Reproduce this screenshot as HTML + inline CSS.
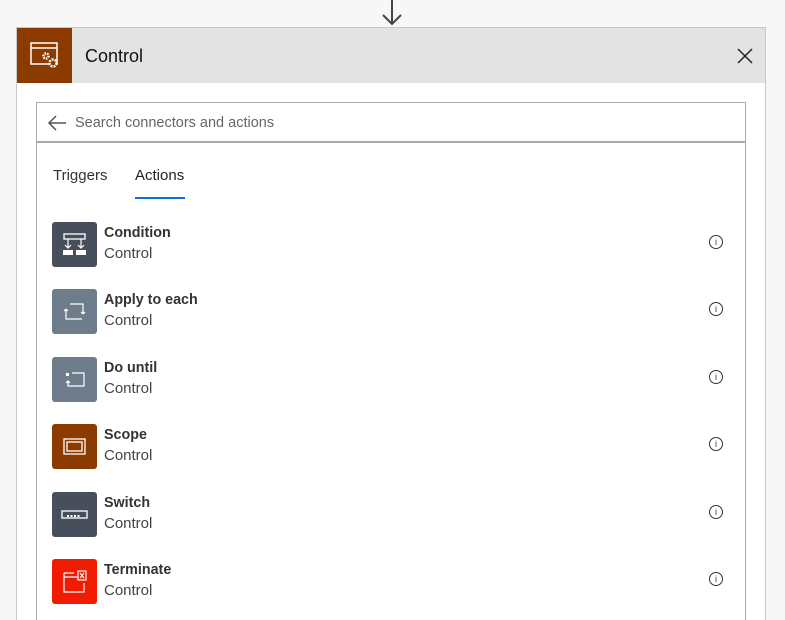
<!DOCTYPE html>
<html><head><style>
html,body{margin:0;width:785px;height:620px;overflow:hidden}
body{background:#f7f7f7;font-family:"Liberation Sans",sans-serif;position:relative}
.card{position:absolute;left:16px;top:27px;width:748px;height:600px;background:#fff;border:1px solid #c8c8c8}
.hdr{position:absolute;left:0;top:0;width:748px;height:55px;background:#e3e3e3}
.hicon{position:absolute;left:0;top:0;width:55px;height:55px;background:#8b3a00}
.htitle{position:absolute;left:68px;top:18px;font-size:18px;color:#111}
.inner{position:absolute;left:36px;top:102px;width:708px;height:530px;border:1px solid #aaa;background:#fff}
.search{height:38px;border-bottom:2px solid #aaa;position:relative}
.search span{position:absolute;left:38px;top:12px;font-size:14.5px;color:#666}
.tab{position:absolute;top:64px;font-size:15px;color:#333}
.row{position:absolute;left:15px;width:680px;height:45px}
.ic{position:absolute;left:0;top:0;width:45px;height:45px;border-radius:3px}
.t{position:absolute;left:52px;top:3px;font-size:14.3px;font-weight:bold;color:#333}
.s{position:absolute;left:52px;top:23px;font-size:15px;color:#444}
.info{position:absolute;left:657px;top:13px;width:12px;height:12px;border:1px solid #333;border-radius:50%;font-size:9px;text-align:center;line-height:12px;color:#333}
</style></head><body>
<svg style="position:absolute;left:380px;top:0" width="24" height="26"><path d="M12 0V24M3 15L12 24L21 15" stroke="#444" stroke-width="2" fill="none"/></svg>
<div class="card">
<div class="hdr"><div class="hicon"><svg width="55" height="55"><rect x="14" y="15" width="26" height="21" fill="none" stroke="#fff" stroke-width="1.5"/><line x1="14" y1="20" x2="40" y2="20" stroke="#fff" stroke-width="1.5"/><circle cx="29" cy="28" r="2.5" fill="none" stroke="#fff" stroke-width="2.5" stroke-dasharray="1.5 1"/><circle cx="36" cy="35" r="3.5" fill="#8b3a00" stroke="#fff" stroke-width="2.5" stroke-dasharray="2 1"/></svg></div><div class="htitle">Control</div>
<svg style="position:absolute;left:719px;top:19px" width="18" height="18"><path d="M2 2L16 16M16 2L2 16" stroke="#222" stroke-width="1.5"/></svg></div>
</div>
<div class="inner">
<div class="search"><svg style="position:absolute;left:10px;top:11px" width="20" height="18"><path d="M19 9H2M9 2L2 9L9 16" stroke="#555" stroke-width="1.5" fill="none"/></svg><span>Search connectors and actions</span></div>
<div class="tab" style="left:16px">Triggers</div>
<div class="tab" style="left:98px;color:#222">Actions</div>
<div style="position:absolute;left:98px;top:94px;width:50px;height:2px;background:#0f6fdc"></div>
<div class="row" style="top:119px"><div class="ic" style="background:#474f5c"><svg width="45" height="45"><rect x="12" y="12" width="21" height="5" fill="none" stroke="#fff" stroke-width="1.3"/><path d="M16 17V26M13 23L16 26L19 23M29 17V26M26 23L29 26L32 23" stroke="#fff" stroke-width="1.2" fill="none"/><rect x="11" y="28" width="10" height="5" fill="#fff"/><rect x="24" y="28" width="10" height="5" fill="#fff"/></svg></div><div class="t">Condition</div><div class="s">Control</div><div class="info">i</div></div>
<div class="row" style="top:186px"><div class="ic" style="background:#6f7c8b"><svg width="45" height="45"><path d="M14 20V30H30M14 20l-2 2M14 20l2 2M31 25V15H18M31 25l-2-2M31 25l2-2" stroke="#fff" stroke-width="1.2" fill="none"/></svg></div><div class="t">Apply to each</div><div class="s">Control</div><div class="info">i</div></div>
<div class="row" style="top:254px"><div class="ic" style="background:#6f7c8b"><svg width="45" height="45"><rect x="14" y="16" width="3" height="3" fill="#fff"/><path d="M20 16H32V29H16V24M14 26l2-2 2 2" stroke="#fff" stroke-width="1.2" fill="none"/></svg></div><div class="t">Do until</div><div class="s">Control</div><div class="info">i</div></div>
<div class="row" style="top:321px"><div class="ic" style="background:#8b3a00"><svg width="45" height="45"><rect x="12" y="15" width="21" height="15" fill="none" stroke="#fff" stroke-width="1.3"/><rect x="15" y="18" width="15" height="9" fill="none" stroke="#fff" stroke-width="1.3"/></svg></div><div class="t">Scope</div><div class="s">Control</div><div class="info">i</div></div>
<div class="row" style="top:389px"><div class="ic" style="background:#474f5c"><svg width="45" height="45"><rect x="10" y="19" width="25" height="7" fill="none" stroke="#fff" stroke-width="1.3"/><path d="M15 24h14" stroke="#fff" stroke-width="2" stroke-dasharray="2 1.5"/></svg></div><div class="t">Switch</div><div class="s">Control</div><div class="info">i</div></div>
<div class="row" style="top:456px"><div class="ic" style="background:#f01b00"><svg width="45" height="45"><path d="M12 14h10M12 18h14M12 14V33H32V24" stroke="#fff" stroke-width="1.2" fill="none"/><rect x="26" y="12" width="8" height="9" fill="none" stroke="#fff" stroke-width="1.2"/><path d="M28 14l4 5M32 14l-4 5" stroke="#fff" stroke-width="1.2"/></svg></div><div class="t">Terminate</div><div class="s">Control</div><div class="info">i</div></div>
</div>
</body></html>
